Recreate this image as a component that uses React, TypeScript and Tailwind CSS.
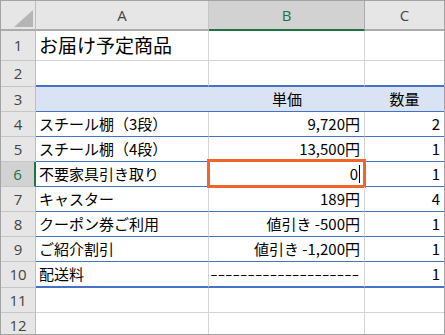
import React from "react";

type RowData = {
  n: number;
  a?: string;
  b?: string;
  c?: string;
};

const jp = "font-['Noto_Sans_CJK_JP','Noto_Sans',sans-serif]";

const body: RowData[] = [
  { n: 4, a: "スチール棚（3段）", b: "9,720円", c: "2" },
  { n: 5, a: "スチール棚（4段）", b: "13,500円", c: "1" },
  { n: 6, a: "不要家具引き取り", b: "0", c: "1" },
  { n: 7, a: "キャスター", b: "189円", c: "4" },
  { n: 8, a: "クーポン券ご利用", b: "値引き -500円", c: "1" },
  { n: 9, a: "ご紹介割引", b: "値引き -1,200円", c: "1" },
  { n: 10, a: "配送料", b: "--------------------", c: "1" },
];

function RowHead({ n, h, active }: { n: number; h: string; active?: boolean }) {
  return (
    <div
      className={
        active
          ? `${h} flex items-center justify-center border-b border-b-[#c6c6c6] border-r-2 border-r-[#217346] bg-[#d2d2d2] text-[15px] text-[#217346] font-['Open_Sans',sans-serif]`
          : `${h} flex items-center justify-center border-b border-b-[#c6c6c6] border-r border-r-[#bdbdbd] bg-[#e6e6e6] text-[15px] text-[#444] font-['Open_Sans',sans-serif]`
      }
    >
      {n}
    </div>
  );
}

export default function App() {
  return (
    <div
      className={`w-[445px] h-[335px] overflow-hidden bg-white border border-[#a3a3a3] ${jp} text-black`}
    >
      <div className="grid grid-cols-[35px_173px_156px_79px]">
        {/* column headers */}
        <div className="h-[30px] flex items-end justify-end pr-[1px] pb-[1px] bg-[#e6e6e6] border-r border-r-[#bdbdbd] border-b-2 border-b-[#ababab]">
          <svg width="20" height="18" viewBox="0 0 20 18">
            <polygon points="19,0 19,17 0,17" fill="#b5b5b5" />
          </svg>
        </div>
        <div className="h-[30px] flex items-center justify-center bg-[#e6e6e6] border-r border-r-[#c6c6c6] border-b-2 border-b-[#ababab] text-[15px] text-[#444] font-['Open_Sans',sans-serif]">
          A
        </div>
        <div className="h-[30px] flex items-center justify-center bg-[#d2d2d2] border-r border-r-[#ababab] border-b-2 border-b-[#217346] text-[15px] text-[#217346] font-['Open_Sans',sans-serif]">
          B
        </div>
        <div className="h-[30px] flex items-center justify-center bg-[#e6e6e6] border-b-2 border-b-[#ababab] text-[15px] text-[#444] font-['Open_Sans',sans-serif]">
          C
        </div>

        {/* row 1: title */}
        <RowHead n={1} h="h-[30px]" />
        <div className="h-[30px] flex items-center pl-[3px] border-r border-b border-[#d4d4d4] text-[19px] whitespace-nowrap">
          お届け予定商品
        </div>
        <div className="h-[30px] border-r border-b border-[#d4d4d4]" />
        <div className="h-[30px] border-b border-[#d4d4d4]" />

        {/* row 2 */}
        <RowHead n={2} h="h-[26px]" />
        <div className="h-[26px] border-r border-r-[#d4d4d4] border-b-2 border-b-[#4472c4]" />
        <div className="h-[26px] border-r border-r-[#d4d4d4] border-b-2 border-b-[#4472c4]" />
        <div className="h-[26px] border-b-2 border-b-[#4472c4]" />

        {/* row 3: table heading */}
        <RowHead n={3} h="h-[25px]" />
        <div className="h-[25px] bg-[#dae3f3] border-b border-b-[#4472c4]" />
        <div className="h-[25px] flex items-center justify-center bg-[#dae3f3] border-b border-b-[#4472c4] text-[15px]">
          単価
        </div>
        <div className="h-[25px] flex items-center justify-center bg-[#dae3f3] border-b border-b-[#4472c4] text-[15px]">
          数量
        </div>

        {/* rows 4-10: items */}
        {body.map((r) => {
          const last = r.n === 10;
          const h = last ? "h-[26px]" : "h-[25px]";
          const bottom = last
            ? "border-b-2 border-b-[#4472c4]"
            : "border-b border-b-[#4472c4]";
          const selected = r.n === 6;
          return (
            <React.Fragment key={r.n}>
              <RowHead n={r.n} h={h} active={selected} />
              <div
                className={`${h} flex items-center pl-[3px] border-r border-r-[#d4d4d4] ${bottom} text-[15px] whitespace-nowrap`}
              >
                {r.a}
              </div>
              <div
                className={
                  last
                    ? `${h} flex items-center justify-end pr-[5px] border-r border-r-[#d4d4d4] ${bottom} text-[15px] whitespace-nowrap`
                    : `${h} relative flex items-center justify-end pr-[4px] border-r border-r-[#d4d4d4] ${bottom} text-[15px] whitespace-nowrap`
                }
              >
                {last ? (
                  <span className="inline-block origin-right scale-x-[1.43]">{r.b}</span>
                ) : (
                  r.b
                )}
                {selected && (
                  <>
                    <span className="ml-[1px] w-px h-[18px] bg-black" />
                    <div className="absolute left-[-2px] top-[-3px] w-[159px] h-[29px] border-[3px] border-[#f0652a] pointer-events-none" />
                  </>
                )}
              </div>
              <div
                className={`${h} flex items-center justify-end pr-[4px] ${bottom} text-[15px]`}
              >
                {r.c}
              </div>
            </React.Fragment>
          );
        })}

        {/* rows 11-12: empty */}
        {[11, 12].map((n) => (
          <React.Fragment key={n}>
            <RowHead n={n} h="h-[25px]" />
            <div className="h-[25px] border-r border-b border-[#d4d4d4]" />
            <div className="h-[25px] border-r border-b border-[#d4d4d4]" />
            <div className="h-[25px] border-b border-[#d4d4d4]" />
          </React.Fragment>
        ))}
      </div>
    </div>
  );
}
